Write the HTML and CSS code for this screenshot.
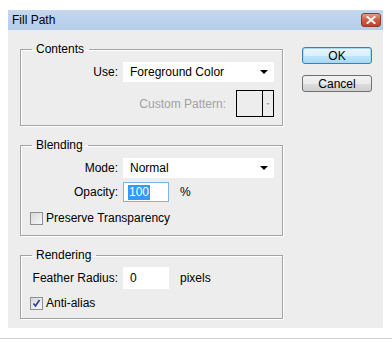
FILE: index.html
```html
<!DOCTYPE html>
<html lang="en">
<head>
    <meta charset="UTF-8">
    <title>Fill Path</title>
    <link rel="stylesheet" href="styles.css">
</head>
<body>
    <div class="window">
        <div class="titlebar">
            <span class="title">Fill Path</span>
            <span class="close-btn">
                <svg width="10" height="8" viewBox="0 0 10 8">
                    <path d="M1.5 1 L8.5 7 M8.5 1 L1.5 7" stroke="#fff" stroke-width="2" stroke-linecap="square"/>
                </svg>
            </span>
        </div>

        <div class="dialog">
            <div class="groups">
                <!-- Contents -->
                <fieldset class="group group-contents">
                    <legend>Contents</legend>
                    <div class="field">
                        <label>Use:</label>
                        <div class="select">Foreground Color<span class="caret"></span></div>
                    </div>
                    <div class="pattern-row">
                        <span class="muted">Custom Pattern:</span>
                        <div class="pattern-picker">
                            <span class="swatch"></span>
                            <span class="pattern-arrow"></span>
                        </div>
                    </div>
                </fieldset>

                <!-- Blending -->
                <fieldset class="group group-blending">
                    <legend>Blending</legend>
                    <div class="field">
                        <label>Mode:</label>
                        <div class="select">Normal<span class="caret"></span></div>
                    </div>
                    <div class="field field-tight">
                        <label>Opacity:</label>
                        <div class="input input-focus"><span class="selected-text">100</span></div>
                        <span class="unit">%</span>
                    </div>
                    <div class="check-row">
                        <span class="checkbox"></span>
                        <span>Preserve Transparency</span>
                    </div>
                </fieldset>

                <!-- Rendering -->
                <fieldset class="group group-rendering">
                    <legend>Rendering</legend>
                    <div class="field">
                        <label>Feather Radius:</label>
                        <div class="input">0</div>
                        <span class="unit">pixels</span>
                    </div>
                    <div class="check-row">
                        <span class="checkbox">
                            <svg width="11" height="11" viewBox="0 0 11 11">
                                <path d="M2.5 5.5 L4.5 8 L8.5 2" fill="none" stroke="#2a3f8c" stroke-width="1.6"/>
                            </svg>
                        </span>
                        <span>Anti-alias</span>
                    </div>
                </fieldset>
            </div>

            <div class="actions">
                <button class="btn btn-default">OK</button>
                <button class="btn">Cancel</button>
            </div>
        </div>
    </div>
    <div class="bottom-rule"></div>
</body>
</html>
```

FILE: styles.css
```css
:root {
    --dialog-bg: #ededed;
    --group-border: #a3a3a3;
    --text-color: #000;
    --muted-color: #a2a2a2;
}

*, *::before, *::after {
    box-sizing: border-box;
}

body {
    margin: 0;
    background: #fff;
    font-family: "Liberation Sans", Arial, sans-serif;
    font-size: 12px;
    color: var(--text-color);
}

.window {
    width: 375px;
    margin: 10px 0 0 8px;
}

/* title bar */
.titlebar {
    height: 20px;
    display: flex;
    align-items: center;
    justify-content: space-between;
    padding: 0 2px 0 4px;
    background: linear-gradient(#c4d8ef, #b5cce7);
}

.title {
    font-size: 12px;
}

.close-btn {
    width: 20px;
    height: 14px;
    display: flex;
    align-items: center;
    justify-content: center;
    border: 1px solid #8c3a2e;
    border-radius: 3px;
    background: linear-gradient(#e79a8b, #d05a44 50%, #c0412c);
}

/* dialog body */
.dialog {
    height: 298px;
    display: flex;
    align-items: flex-start;
    padding: 12px 11px 0 12px;
    background: var(--dialog-bg);
}

.groups {
    width: 263px;
}

.group {
    margin: 0;
    padding: 6px 8px 8px 0;
    border: 1px solid var(--group-border);
    box-shadow: 1px 1px 0 #fff, inset 1px 1px 0 #fff;
}

.group legend {
    margin-left: 11px;
    padding: 0 5px 0 4px;
    line-height: 14px;
}

.group-blending,
.group-rendering {
    margin-top: 12px;
}

.group-blending {
    padding-bottom: 10px;
}

.group-rendering {
    padding-top: 5px;
}

.field {
    display: grid;
    grid-template-columns: 97px auto 1fr;
    column-gap: 5px;
    align-items: center;
}

.field label {
    text-align: right;
}

.field .select {
    grid-column: 2 / 4;
}

.field-tight {
    margin-top: 4px;
}

.select {
    height: 20px;
    display: flex;
    align-items: center;
    justify-content: space-between;
    padding: 0 6px 0 7px;
    background: #fff;
}

.caret {
    width: 0;
    height: 0;
    border-left: 4px solid transparent;
    border-right: 4px solid transparent;
    border-top: 4px solid #000;
}

.pattern-row {
    display: flex;
    align-items: center;
    justify-content: flex-end;
    gap: 10px;
    margin-top: 8px;
}

.muted {
    color: var(--muted-color);
}

.pattern-picker {
    width: 38px;
    height: 27px;
    display: flex;
    border: 1px solid #000;
}

.swatch {
    flex: 1;
    border-right: 1px solid #000;
}

.pattern-arrow {
    width: 10px;
    display: flex;
    align-items: center;
    justify-content: center;
}

.pattern-arrow::after {
    content: "";
    border-left: 2px solid transparent;
    border-right: 2px solid transparent;
    border-top: 2px solid #b0b0b0;
}

.input {
    width: 46px;
    height: 20px;
    display: flex;
    align-items: center;
    padding-left: 6px;
    background: #fff;
    border: 1px solid #fff;
}

.group-rendering .input {
    height: 22px;
}

.input-focus {
    border-color: #7eb4ea;
    padding-left: 4px;
}

.selected-text {
    background: #3399ff;
    color: #fff;
    padding: 0 1px;
    line-height: 15px;
}

.unit {
    margin-left: 6px;
}

.check-row {
    display: flex;
    align-items: center;
    gap: 3px;
    margin-top: 9px;
    padding-left: 9px;
}

.group-rendering .check-row {
    margin-top: 7px;
}

.checkbox {
    width: 13px;
    height: 13px;
    display: flex;
    align-items: center;
    justify-content: center;
    border: 1px solid #8f8f8f;
    background: linear-gradient(135deg, #d8d8d8, #f7f7f7);
}

/* buttons */
.actions {
    display: flex;
    flex-direction: column;
    gap: 11px;
    width: 70px;
    margin-top: 5px;
    margin-left: auto;
}

.btn {
    height: 17px;
    padding: 0;
    font-family: inherit;
    font-size: 12px;
    color: #000;
    border: 1px solid #707070;
    border-radius: 3px;
    background: linear-gradient(#f2f2f2, #ebebeb 50%, #dddddd 51%, #cfcfcf);
}

.btn-default {
    border-color: #3c7fb1;
    box-shadow: inset 0 0 0 1px #a6d9f5;
    background: linear-gradient(#eaf6fd, #d9f0fc 50%, #bee6fd 51%, #a7d9f5);
}

.bottom-rule {
    height: 1px;
    margin-top: 10px;
    background: #d2d2d2;
}
```
